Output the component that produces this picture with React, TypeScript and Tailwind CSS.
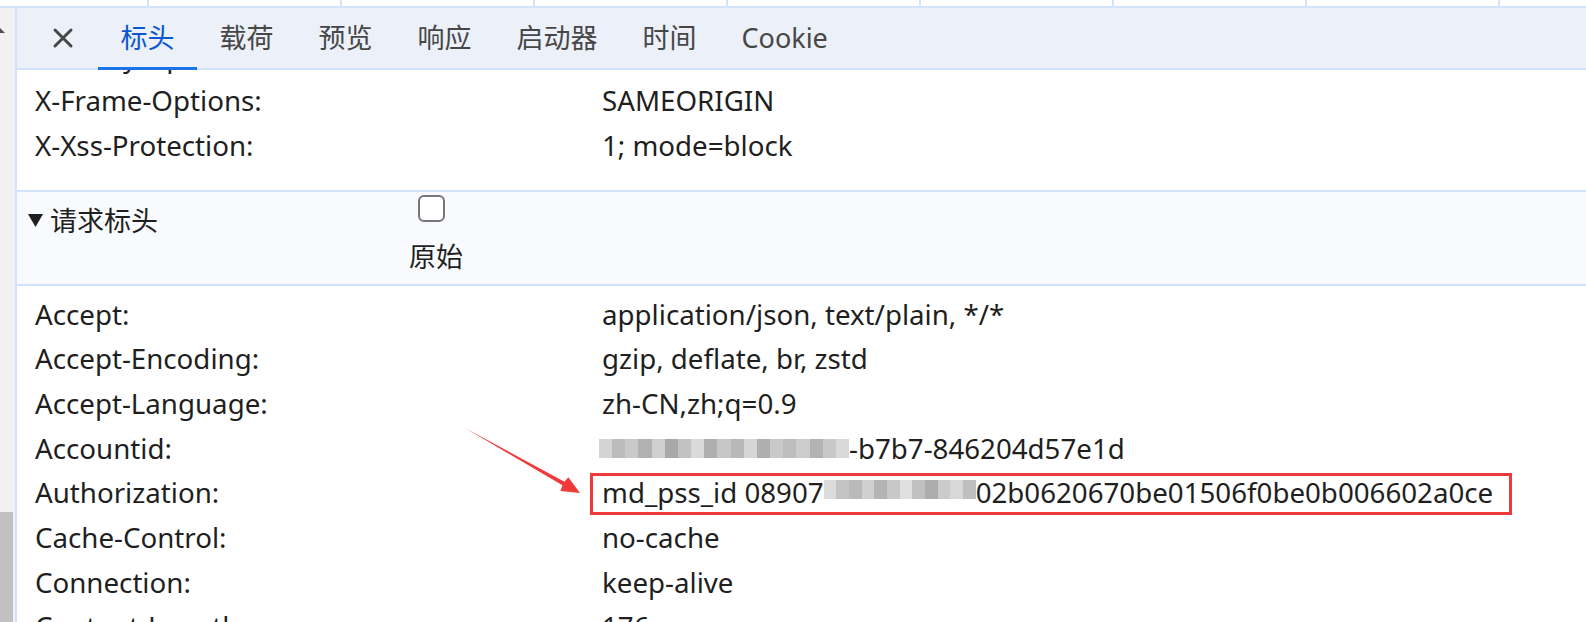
import React from "react";

const tabs = ["标头", "载荷", "预览", "响应", "启动器", "时间", "Cookie"];

const responseRows = [
  ["X-Envoy-Upstream-Service-Time:", "12"],
  ["X-Frame-Options:", "SAMEORIGIN"],
  ["X-Xss-Protection:", "1; mode=block"],
];

const idBlocks = [
  "bg-[#d4d4d4]", "bg-[#bcbcbc]", "bg-[#c9c9c9]", "bg-[#b1b1b1]", "bg-[#cfcfcf]",
  "bg-[#a9a9a9]", "bg-[#c2c2c2]", "bg-[#dadada]", "bg-[#aeaeae]", "bg-[#c6c6c6]",
  "bg-[#b8b8b8]", "bg-[#d6d6d6]", "bg-[#afafaf]", "bg-[#c9c9c9]", "bg-[#bdbdbd]",
  "bg-[#cccccc]", "bg-[#b3b3b3]", "bg-[#c8c8c8]", "bg-[#d9d9d9]",
];

const authBlocks = [
  "bg-[#dcdcdc]", "bg-[#c3c3c3]", "bg-[#bababa]", "bg-[#cfcfcf]", "bg-[#b4b4b4]",
  "bg-[#c8c8c8]", "bg-[#e0e0e0]", "bg-[#c0c0c0]", "bg-[#adadad]", "bg-[#cbcbcb]",
  "bg-[#d8d8d8]", "bg-[#bfbfbf]",
];

function Mosaic({ blocks, className }: { blocks: string[]; className?: string }) {
  return (
    <span className={"flex h-[19px] shrink-0 " + (className ?? "")}>
      {blocks.map((b, i) => (
        <span key={i} className={"h-full flex-1 " + b} />
      ))}
    </span>
  );
}

function Row({ name, children }: { name: string; children: React.ReactNode }) {
  return (
    <div className="relative flex h-[44.7px] items-center pl-[18px] text-[27.7px]">
      <div className="w-[567px] shrink-0 whitespace-nowrap">{name}</div>
      <div className="flex items-center whitespace-nowrap">{children}</div>
    </div>
  );
}

export default function App() {
  return (
    <div className="relative h-[622px] w-[1586px] overflow-hidden bg-white font-['Noto_Sans','Noto_Sans_CJK_SC',sans-serif] text-[27px] text-[#1f1f1f]">
      {/* strip of the request table above */}
      <div className="flex h-[8px] border-b-2 border-[#d3e3fd]">
        <div className="w-[147px] shrink-0" />
        {[0, 1, 2, 3, 4, 5, 6, 7].map((i) => (
          <div key={i} className="w-[193px] shrink-0 border-l-2 border-[#d3e3fd]" />
        ))}
      </div>

      <div className="flex h-[614px]">
        {/* scrollbar */}
        <div className="flex w-[17px] shrink-0 flex-col border-r-2 border-[#d3e3fd] bg-[#f1f1f1]">
          <svg width="6" height="6" className="mt-[20px]">
            <polygon points="0,0 5,5 0,5" fill="#505050" />
          </svg>
          <div className="flex-1" />
          <div className="h-[110px] w-[13px] bg-[#c1c1c1]" />
        </div>

        <div className="flex min-w-0 flex-1 flex-col">
          {/* tab bar */}
          <div className="relative z-10 flex h-[62px] shrink-0 items-center border-b-2 border-[#d3e3fd] bg-[#ebf0f9] pl-[24px]">
            <div className="flex h-full w-[44px] items-center justify-center">
              <svg width="22" height="22" viewBox="0 0 22 22">
                <path d="M3 3 L19 19 M19 3 L3 19" stroke="#474747" strokeWidth="3" strokeLinecap="round" />
              </svg>
            </div>
            <div className="ml-[13px] flex h-full">
              {tabs.map((t, i) => (
                <div
                  key={t}
                  className={
                    "relative flex h-full items-center px-[22.5px] " +
                    (i === 0 ? "text-[#0b57d0]" : "text-[#474747]")
                  }
                >
                  {t}
                  {i === 0 && <div className="absolute bottom-[-2px] left-0 right-0 h-[3px] bg-[#1a73e8]" />}
                </div>
              ))}
            </div>
          </div>

          <div className="relative flex-1 overflow-hidden">
            {/* response headers (scrolled) */}
            <div className="-mt-[36px] border-b-2 border-[#d3e3fd] pb-[22px]">
              {responseRows.map(([n, v]) => (
                <Row key={n} name={n}>
                  {v}
                </Row>
              ))}
            </div>

            {/* request headers title */}
            <div className="flex h-[94px] border-b-2 border-[#d3e3fd] bg-[#f8fafd]">
              <div className="flex h-[58px] w-[392px] shrink-0 items-center pl-[11px]">
                <svg width="15" height="14" viewBox="0 0 15 14" className="mr-[7px]">
                  <polygon points="0,0 15,0 7.5,13" fill="#1f1f1f" />
                </svg>
                请求标头
              </div>
              <div className="flex flex-col">
                <div className="ml-[9px] mt-[3px] h-[27px] w-[27px] rounded-[6px] border-2 border-[#767676] bg-white" />
                <div className="mt-[20px] leading-[30px]">原始</div>
              </div>
            </div>

            <div className="pt-[6px]">
              <Row name="Accept:">application/json, text/plain, */*</Row>
              <Row name="Accept-Encoding:">gzip, deflate, br, zstd</Row>
              <Row name="Accept-Language:">zh-CN,zh;q=0.9</Row>
              <Row name="Accountid:">
                <Mosaic blocks={idBlocks} className="-ml-[3px] w-[250px]" />
                <span>-b7b7-846204d57e1d</span>
              </Row>
              <Row name="Authorization:">
                <span>md_pss_id 08907</span>
                <Mosaic blocks={authBlocks} className="w-[152px] -translate-y-[4px]" />
                <span>02b0620670be01506f0be0b006602a0ce</span>
                <div className="absolute left-[573px] top-[2px] h-[42px] w-[922px] border-[3px] border-[#ee3a3a]" />
              </Row>
              <Row name="Cache-Control:">no-cache</Row>
              <Row name="Connection:">keep-alive</Row>
              <Row name="Content-Length:">176</Row>
            </div>
          </div>
        </div>
      </div>

      {/* annotation arrow */}
      <svg className="absolute left-[460px] top-[423px]" width="125" height="75" viewBox="0 0 125 75">
        <polygon
          points="5,5 104.48,58.86 108.32,54.14 120,70 100.4,68.04 102.5,62.34"
          fill="#f03a3a"
        />
      </svg>
    </div>
  );
}
